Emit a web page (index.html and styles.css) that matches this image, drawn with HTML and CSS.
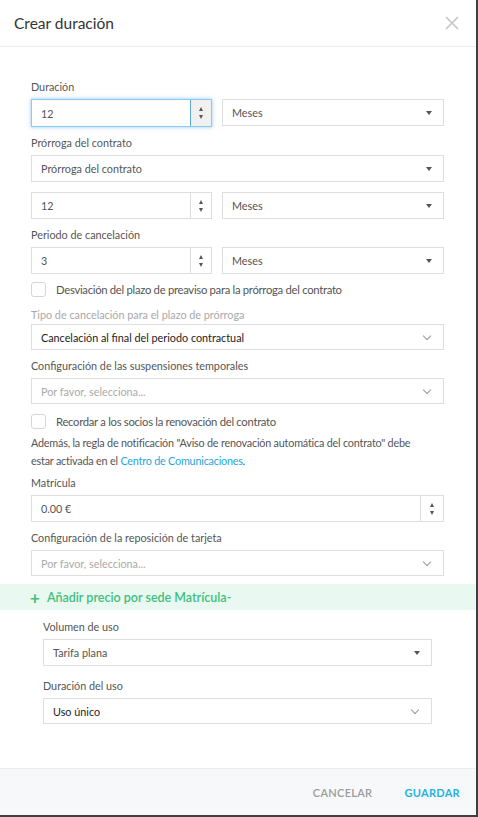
FILE: index.html
```html
<!DOCTYPE html>
<html lang="es">
<head>
    <meta charset="UTF-8">
    <title>Crear duración</title>
    <meta name="viewport" content="width=device-width, initial-scale=1.0">
    <link rel="stylesheet" href="styles.css">
</head>
<body>
    <div class="modal">
        <header class="modal-header">
            <h3>Crear duración</h3>
            <button class="close-btn" aria-label="Cerrar">
                <svg width="14" height="14" viewBox="0 0 14 14"><path d="M1 1L13 13M13 1L1 13" stroke="#c4c4c4" stroke-width="1.6"/></svg>
            </button>
        </header>

        <div class="modal-body">
            <div class="field">
                <label>Duración</label>
                <div class="row">
                    <div class="number focused">
                        <span class="value">12</span>
                        <span class="spin"><i class="up"></i><i class="down"></i></span>
                    </div>
                    <div class="select native"><span>Meses</span><i class="caret"></i></div>
                </div>
            </div>

            <div class="field tight">
                <label>Prórroga del contrato</label>
                <div class="select native"><span>Prórroga del contrato</span><i class="caret"></i></div>
            </div>
            <div class="field">
                <div class="row">
                    <div class="number">
                        <span class="value">12</span>
                        <span class="spin"><i class="up"></i><i class="down"></i></span>
                    </div>
                    <div class="select native"><span>Meses</span><i class="caret"></i></div>
                </div>
            </div>

            <div class="field">
                <label>Periodo de cancelación</label>
                <div class="row">
                    <div class="number">
                        <span class="value">3</span>
                        <span class="spin"><i class="up"></i><i class="down"></i></span>
                    </div>
                    <div class="select native"><span>Meses</span><i class="caret"></i></div>
                </div>
            </div>

            <div class="check first">
                <span class="box"></span>
                <span>Desviación del plazo de preaviso para la prórroga del contrato</span>
            </div>

            <div class="field">
                <label class="muted">Tipo de cancelación para el plazo de prórroga</label>
                <div class="select custom"><span class="strong">Cancelación al final del periodo contractual</span><i class="chev"></i></div>
            </div>

            <div class="field">
                <label>Configuración de las suspensiones temporales</label>
                <div class="select custom"><span class="placeholder">Por favor, selecciona...</span><i class="chev"></i></div>
            </div>

            <div class="check">
                <span class="box"></span>
                <span>Recordar a los socios la renovación del contrato</span>
            </div>

            <p class="note">
                <span class="line">Además, la regla de notificación "Aviso de renovación automática del contrato" debe</span>
                <span class="line">estar activada en el <a href="#">Centro de Comunicaciones</a>.</span>
            </p>

            <div class="field">
                <label>Matrícula</label>
                <div class="number wide">
                    <span class="value">0.00 €</span>
                    <span class="spin"><i class="up"></i><i class="down"></i></span>
                </div>
            </div>

            <div class="field">
                <label>Configuración de la reposición de tarjeta</label>
                <div class="select custom"><span class="placeholder">Por favor, selecciona...</span><i class="chev"></i></div>
            </div>
        </div>

        <div class="add-bar">
            <span class="plus">+</span> Añadir precio por sede Matrícula-
        </div>

        <div class="sub-section">
            <div class="field">
                <label>Volumen de uso</label>
                <div class="select native"><span>Tarifa plana</span><i class="caret"></i></div>
            </div>
            <div class="field">
                <label>Duración del uso</label>
                <div class="select custom"><span class="strong">Uso único</span><i class="chev"></i></div>
            </div>
        </div>

        <footer class="modal-footer">
            <button class="btn cancel">Cancelar</button>
            <button class="btn save">Guardar</button>
        </footer>
    </div>
</body>
</html>
```

FILE: styles.css
```css
body {
    margin: 0;
    background: #3d3f42;
    font-family: "Source Sans Pro", Lato, "Noto Sans", sans-serif;
    color: #555;
}
.modal {
    width: 476px;
    height: 815px;
    background: #fff;
    display: flex;
    flex-direction: column;
}
.modal-header {
    height: 46px;
    border-bottom: 1px solid #ececec;
    display: flex;
    align-items: center;
    justify-content: space-between;
    padding: 0 17px 0 14px;
}
.modal-header h3 {
    margin: 0;
    font-size: 15.5px;
    font-weight: 400;
    color: #333;
}
.close-btn {
    background: transparent;
    border: none;
    padding: 0;
    cursor: pointer;
    display: flex;
}

.modal-body {
    padding: 32px 32px 0 31px;
}
.field {
    margin-bottom: 8px;
}
.field.tight {
    margin-bottom: 10px;
}
label {
    display: block;
    font-size: 10.8px;
    line-height: 16px;
    margin-bottom: 4px;
    color: #555;
}
label.muted {
    color: #a8a8a8;
    margin-bottom: 1px;
}
.row {
    display: flex;
    gap: 10px;
}
.row .number {
    width: 181px;
    flex: none;
}
.row .select {
    flex: 1;
}

.number,
.select {
    box-sizing: border-box;
    height: 27px;
    border: 1px solid #dedede;
    display: flex;
    align-items: center;
    font-size: 10.8px;
    background: #fff;
}
.number .value {
    flex: 1;
    padding-left: 9px;
    color: #555;
}
.spin {
    width: 20px;
    height: 100%;
    border-left: 1px solid #dedede;
    display: flex;
    flex-direction: column;
    align-items: center;
    justify-content: center;
    gap: 4px;
}
.spin i {
    width: 0;
    height: 0;
    border-left: 2.5px solid transparent;
    border-right: 2.5px solid transparent;
}
.spin .up {
    border-bottom: 4px solid #555;
}
.spin .down {
    border-top: 4px solid #555;
}
.number.focused {
    border-color: #8ccaf0;
    box-shadow: 0 0 4px rgba(102, 175, 233, 0.7);
    height: 28px;
}
.number.focused .spin {
    background: #f0f0f0;
    border-left-color: #5aa7dc;
}
.number.wide .spin {
    width: 22px;
}

.select {
    justify-content: space-between;
    padding: 0 11px 0 9px;
}
.select.native span {
    color: #555;
}
.select.custom {
    height: 26px;
}
.caret {
    width: 0;
    height: 0;
    border-left: 3px solid transparent;
    border-right: 3px solid transparent;
    border-top: 4px solid #555;
}
.chev {
    width: 5px;
    height: 5px;
    border-right: 1.5px solid #999;
    border-bottom: 1.5px solid #999;
    transform: rotate(45deg);
    margin: 0 2px 3px 0;
}
.strong {
    color: #222;
}
.placeholder {
    color: #aaa;
}

.check {
    display: flex;
    align-items: center;
    gap: 10px;
    font-size: 11.3px;
    letter-spacing: -0.3px;
    color: #555;
    margin: 10px 0 5px;
}
.check.first {
    margin-top: 8px;
    margin-bottom: 10px;
}
.check .box {
    width: 13px;
    height: 13px;
    border: 1px solid #d6d6d6;
    border-radius: 3px;
    flex: none;
}
.note {
    margin: 0 0 5px;
    font-size: 10.8px;
    letter-spacing: -0.2px;
    line-height: 18px;
    color: #555;
}
.note .line {
    display: block;
}
.note a {
    color: #1ea6dc;
    text-decoration: none;
}

.add-bar {
    height: 26px;
    background: #e9f8f1;
    display: flex;
    align-items: center;
    padding-left: 30px;
    font-size: 12.5px;
    font-weight: 600;
    color: #3ebf7c;
}
.add-bar .plus {
    font-size: 17px;
    font-weight: 700;
    margin-right: 7px;
    line-height: 1;
}

.sub-section {
    padding: 9px 44px 0 43px;
}
.sub-section .field {
    margin-bottom: 12px;
}

.modal-footer {
    margin-top: auto;
    height: 46px;
    border-top: 1px solid #ececec;
    background: #f7f8fa;
    display: flex;
    justify-content: flex-end;
    align-items: center;
    padding-right: 16px;
    gap: 32px;
}
.btn {
    background: transparent;
    border: none;
    padding: 0;
    font-family: inherit;
    font-size: 11px;
    font-weight: 600;
    text-transform: uppercase;
    letter-spacing: 0.3px;
    cursor: pointer;
}
.btn.cancel {
    color: #9b9b9b;
}
.btn.save {
    color: #1fb2e4;
    font-weight: 700;
}
```
